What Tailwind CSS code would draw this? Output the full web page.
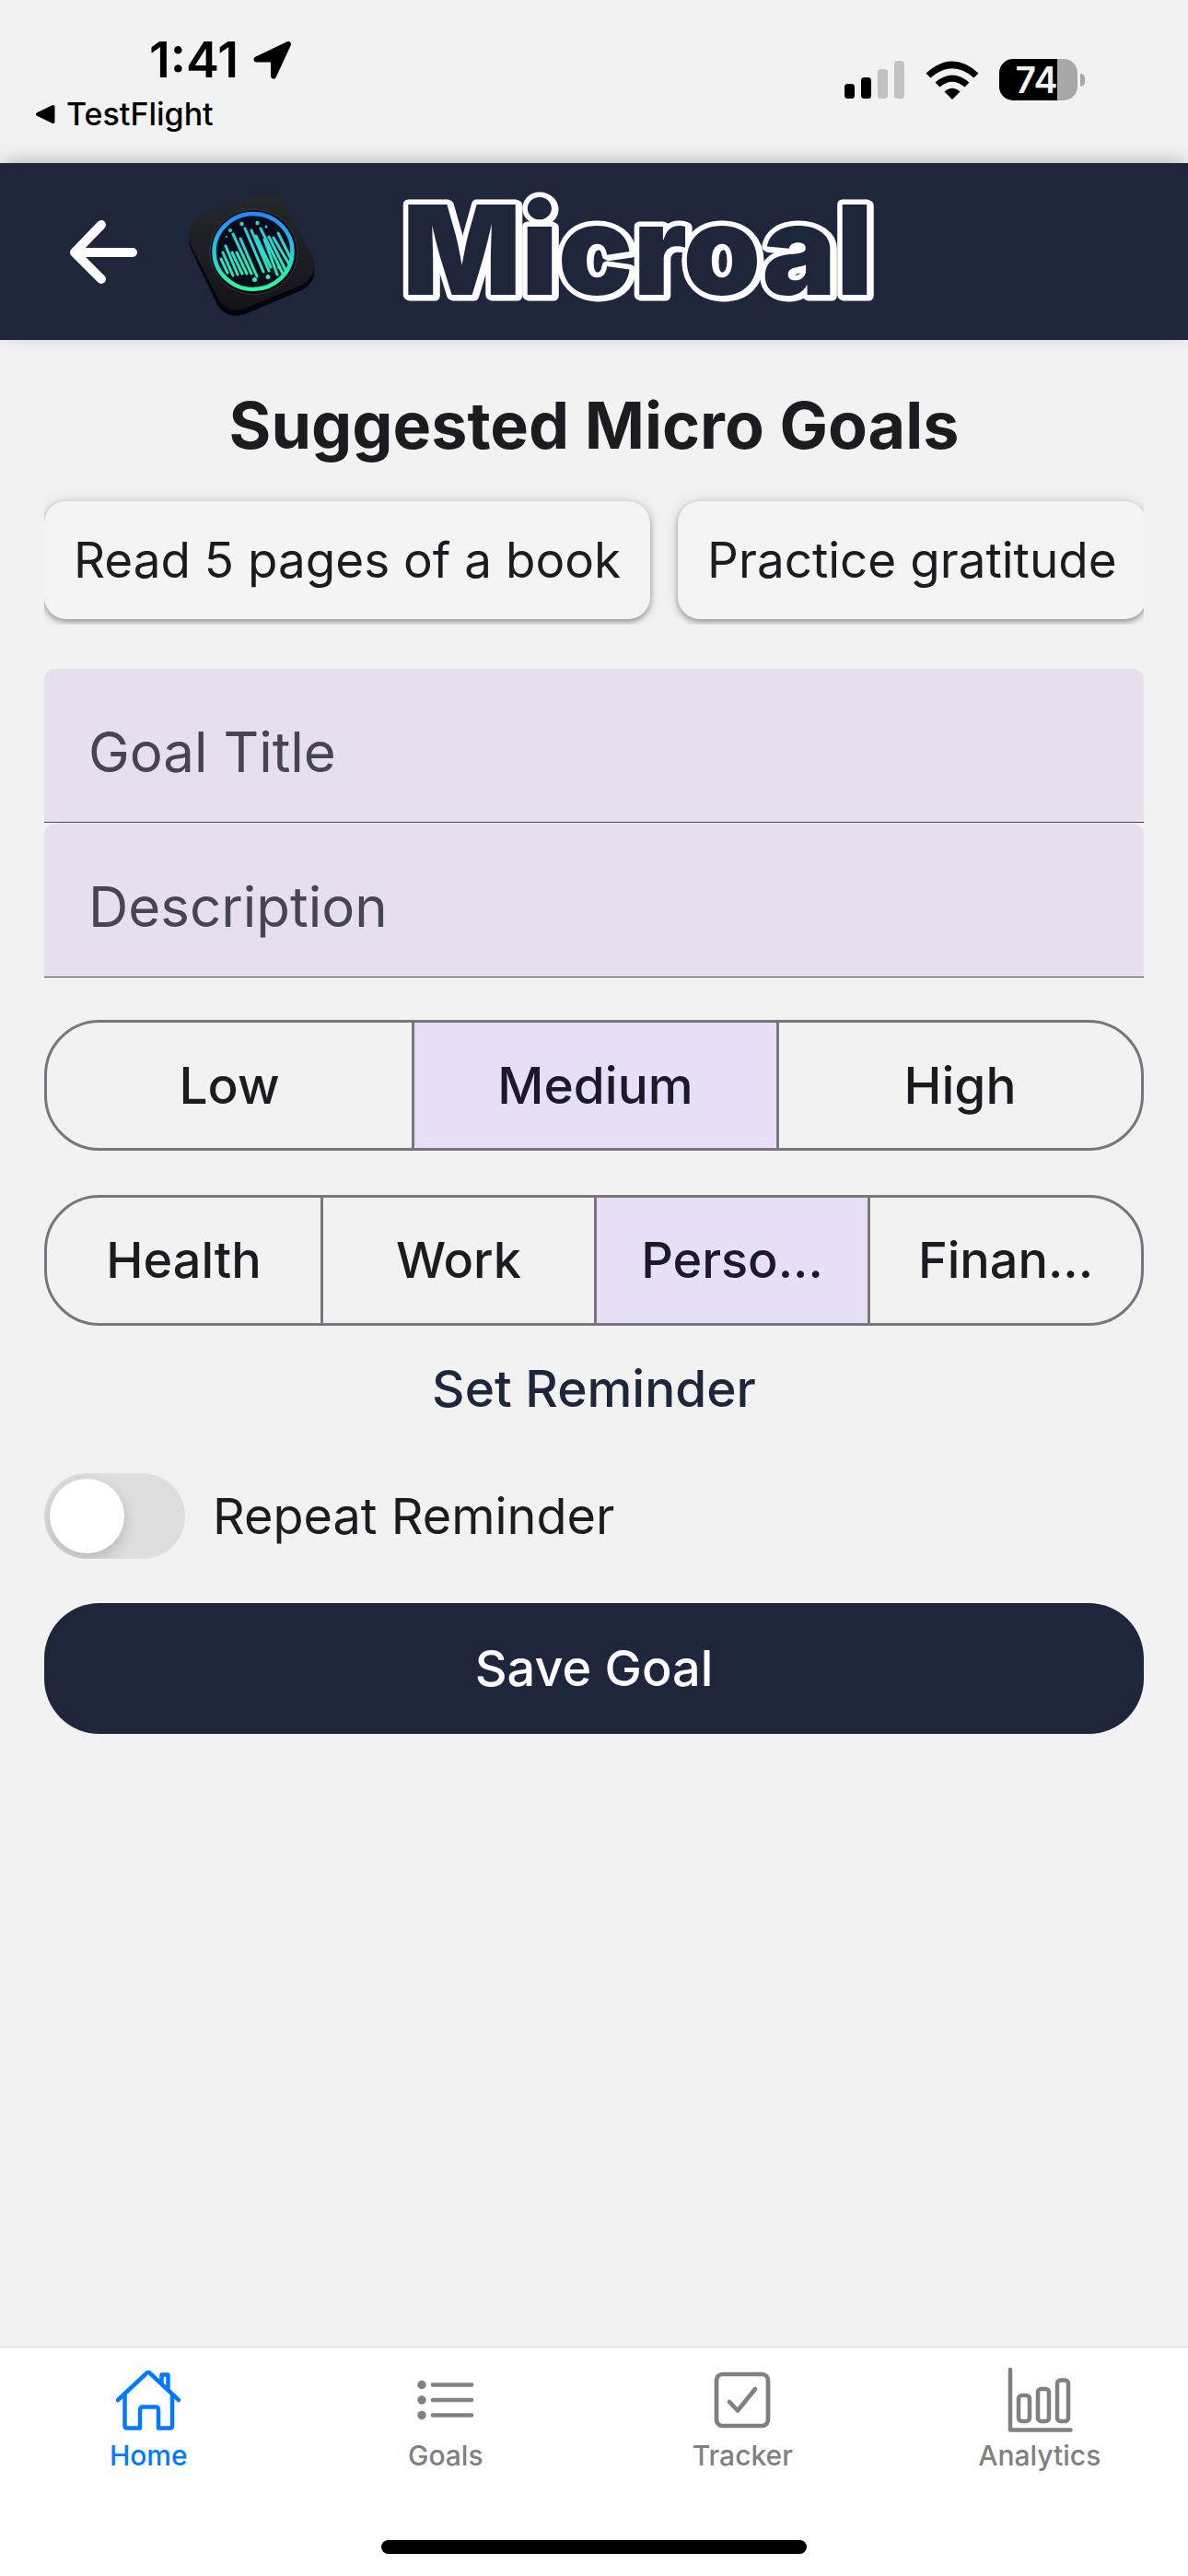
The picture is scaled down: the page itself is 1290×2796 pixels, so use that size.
<!DOCTYPE html>
<html lang="en">
<head>
<meta charset="utf-8">
<meta name="viewport" content="width=device-width, initial-scale=1">
<title>Microal</title>
<script src="https://cdn.jsdelivr.net/npm/@tailwindcss/browser@4"></script>
</head>
<body class="flex min-h-screen flex-col bg-[#f2f2f2] font-['Inter',sans-serif] text-[#1c1b1f]">

<!-- Status bar -->
<div class="flex h-[177px] items-start justify-between pr-[112px] pl-9 text-black">
  <div class="flex flex-col pt-9">
    <div class="flex items-center gap-4 pl-[126px]">
      <span class="text-[54px] leading-[58px] font-semibold">1:41</span>
      <svg class="h-[42px] w-[42px]" viewBox="0 0 42 42" aria-hidden="true"><path d="M3.500 20.500 L38 4 L22 38.500 V20.500 Z" fill="currentColor" stroke="currentColor" stroke-width="6" stroke-linejoin="round"/></svg>
    </div>
    <a href="#" class="flex items-center gap-3">
      <svg class="h-6 w-6" viewBox="0 0 24 24" aria-hidden="true"><path d="M5 12 L21.500 4 V20 Z" fill="currentColor" stroke="currentColor" stroke-width="4" stroke-linejoin="round"/></svg>
      <span class="text-[34px] leading-[60px] font-medium">TestFlight</span>
    </a>
  </div>
  <div class="flex items-center gap-[22px] pt-16">
    <svg class="h-[41px] w-[66px]" viewBox="0 0 66 41" aria-hidden="true">
      <rect x="0" y="25" width="11" height="16" rx="3.500"/><rect x="18" y="18" width="11" height="23" rx="3.500"/>
      <rect x="36" y="9" width="11" height="32" rx="3.500" fill="#c2c2c2"/><rect x="54" y="0" width="11" height="41" rx="3.500" fill="#c2c2c2"/>
    </svg>
    <svg class="h-[42px] w-[58px]" viewBox="0 0 58 42" aria-hidden="true">
      <path d="M29 42 L20.500 33.500 Q29 26 37.500 33.500 Z"/>
      <path d="M10.500 23.500 Q29 7.500 47.500 23.500 L42.500 28.500 Q29 17 15.500 28.500 Z"/>
      <path d="M0.500 13.500 Q29 -12.500 57.500 13.500 L52.500 18.500 Q29 -2 5.500 18.500 Z"/>
    </svg>
    <div class="flex items-center gap-[3px]">
      <div class="flex h-[45px] w-[85px] items-center justify-center rounded-[15px] bg-linear-to-r from-black from-74% to-[#a8a8a8] to-74% pr-1 text-[39px] leading-[45px] font-semibold text-[#f2f2f2]">74</div>
      <div class="h-[14px] w-[5px] rounded-r-full bg-[#a8a8a8]"></div>
    </div>
  </div>
</div>

<!-- App header -->
<header class="flex h-48 items-center bg-[#1e263b] pl-[72px] shadow-[0_-4px_20px_-4px_rgba(0,0,0,0.3)]">
  <button type="button" aria-label="Back">
    <svg class="h-[74px] w-20" viewBox="0 0 80 74" fill="none" stroke="#fff" stroke-width="10" stroke-linecap="round" stroke-linejoin="round" aria-hidden="true"><path d="M10 38 H72 M38 8 L9 38 L38 67"/></svg>
  </button>
  <svg class="ml-[52px] h-[140px] w-[142px]" viewBox="0 -5 142 140" aria-hidden="true">
    <defs>
      <linearGradient id="ring" x1="0" y1="0" x2="0" y2="1"><stop offset="0" stop-color="#1f8bff"/><stop offset=".5" stop-color="#22c8e0"/><stop offset="1" stop-color="#2dfb9c"/></linearGradient>
      <linearGradient id="wave" gradientUnits="userSpaceOnUse" x1="0" y1="32" x2="0" y2="100"><stop offset="0" stop-color="#2cc4f0"/><stop offset="1" stop-color="#2df0a0"/></linearGradient>
      <linearGradient id="tile" x1="0" y1="0" x2="0" y2="1"><stop offset="0" stop-color="#27282c"/><stop offset="1" stop-color="#131419"/></linearGradient>
    </defs>
    <path d="M1 50 Q1 36 14 28 L80 4 Q98 0 107 16 L136 77 Q141 96 126 106 L62 133 Q42 139 32 123 L4 64 Q1 57 1 50 Z" fill="#04050c"/>
    <path d="M1 48 Q1 34 16 26 L80 3 Q98 -1 107 15 L136 73 Q141 91 125 101 L61 127 Q42 133 33 116 L4 60 Q1 54 1 48 Z" fill="url(#tile)"/>
    <ellipse cx="71.500" cy="65.500" rx="47.500" ry="46" fill="#06070f" stroke="#3a3b40" stroke-width="1"/>
    <ellipse cx="71" cy="65" rx="42.500" ry="41" fill="#060b19" stroke="url(#ring)" stroke-width="4.500"/>
    <g stroke="url(#wave)" stroke-width="3" stroke-linecap="round" fill="none">
      <path d="M36 73 L43 88 M38 66 L49 91 M41 59 L54 90 M48 66 L59 89 M53 66 L64 89 M49 46 L69 89 M57 51 L75 92 M62 40 L82 87 M69 42 L88 86 M74 48 L90 82 M79 40 L103 89 M83 52 L97 90 M88 49 L107 87 M93 50 L110 79 M98 45 L112 73"/>
    </g>
    <g fill="#2cd0dc"><circle cx="46" cy="42" r="2"/><circle cx="58.500" cy="35" r="2.200"/><circle cx="75.500" cy="34" r="2.200"/><circle cx="85" cy="38" r="1.500"/><circle cx="42" cy="49" r="1"/></g>
    <g fill="#2df0b0"><circle cx="72.500" cy="95.500" r="2.500"/><circle cx="87" cy="92.500" r="2.500"/><circle cx="99" cy="82" r="2"/></g>
  </svg>
  <svg class="ml-[88px] h-[184px] w-[540px] overflow-visible drop-shadow-[2px_1px_0_white]" viewBox="0 0 540 184" role="img" aria-label="Microal">
    <text x="3" y="139" class="text-[135px] font-black" fill="#1e263b" stroke="#fff" stroke-width="11" stroke-linejoin="round" paint-order="stroke">Microal</text>
  </svg>
</header>

<main class="flex flex-col px-12 pt-12">
  <h1 class="text-center text-[70px] leading-[90px] font-bold">Suggested Micro Goals</h1>

  <div class="mt-[18px] flex gap-[30px] overflow-x-auto pt-[19px] pb-[6px] [scrollbar-width:none]">
    <button type="button" class="h-32 shrink-0 rounded-3xl bg-[#f4f4f4] px-8 text-[53px] leading-none whitespace-nowrap shadow-[0_3px_6px_rgba(0,0,0,0.35),0_0_16px_rgba(0,0,0,0.12)]">Read 5 pages of a book</button>
    <button type="button" class="h-32 shrink-0 rounded-3xl bg-[#f4f4f4] px-8 text-[53px] leading-none whitespace-nowrap shadow-[0_3px_6px_rgba(0,0,0,0.35),0_0_16px_rgba(0,0,0,0.12)]">Practice gratitude</button>
  </div>

  <form class="mt-12 flex flex-col">
    <input type="text" aria-label="Goal Title" placeholder="Goal Title" class="mb-px h-[167px] w-full rounded-t-xl border-b border-[#49454f] bg-[#e7e0ec] px-12 pt-[14px] text-[60px] outline-none placeholder:text-[#49454f]">
    <input type="text" aria-label="Description" placeholder="Description" class="h-[167px] w-full rounded-t-xl border-b border-[#49454f] bg-[#e7e0ec] px-12 pt-[14px] text-[60px] outline-none placeholder:text-[#49454f]">

    <fieldset aria-label="Priority" class="mt-[46px] grid h-[142px] grid-cols-3 overflow-hidden rounded-[60px] border-3 border-[#79747e] text-[55px] leading-none font-medium">
      <label class="relative flex items-center justify-center has-checked:bg-[#e8def8]"><input type="radio" name="priority" class="sr-only">Low</label>
      <label class="relative flex items-center justify-center border-l-3 border-[#79747e] text-[#1d192b] has-checked:bg-[#e8def8]"><input type="radio" name="priority" class="sr-only" checked>Medium</label>
      <label class="relative flex items-center justify-center border-l-3 border-[#79747e] has-checked:bg-[#e8def8]"><input type="radio" name="priority" class="sr-only">High</label>
    </fieldset>

    <fieldset aria-label="Category" class="mt-12 grid h-[142px] grid-cols-4 overflow-hidden rounded-[60px] border-3 border-[#79747e] text-[54px] leading-none font-medium">
      <label class="relative flex items-center justify-center has-checked:bg-[#e8def8]"><input type="radio" name="category" class="sr-only">Health</label>
      <label class="relative flex items-center justify-center border-l-3 border-[#79747e] has-checked:bg-[#e8def8]"><input type="radio" name="category" class="sr-only">Work</label>
      <label class="relative flex items-center justify-center border-l-3 border-[#79747e] text-[#1d192b] has-checked:bg-[#e8def8]"><input type="radio" name="category" class="sr-only" checked>Perso...</label>
      <label class="relative flex items-center justify-center border-l-3 border-[#79747e] has-checked:bg-[#e8def8]"><input type="radio" name="category" class="sr-only">Finan...</label>
    </fieldset>

    <button type="button" class="mt-6 h-[88px] self-center text-[55px] leading-none font-medium text-[#1e263b]">Set Reminder</button>

    <div class="mt-12 flex items-center gap-[30px]">
      <input id="repeat" type="checkbox" role="switch" class="h-[93px] w-[153px] appearance-none overflow-hidden rounded-full bg-[#dedede] p-[6px] before:block before:size-[81px] before:rounded-full before:bg-white before:shadow-[0_6px_16px_rgba(0,0,0,0.18)] checked:bg-[#1e263b] checked:before:ml-auto">
      <label for="repeat" class="text-[54px] leading-none">Repeat Reminder</label>
    </div>

    <button type="submit" class="mt-12 h-[142px] rounded-[60px] bg-[#1e263b] text-[54px] leading-none font-medium text-white">Save Goal</button>
  </form>
</main>

<!-- Tab bar -->
<nav class="mt-auto border-t border-[#d8d8d8] bg-white pb-6 text-[30px] leading-9 font-medium text-[#808080]">
  <div class="grid grid-cols-4">
    <a href="#" aria-current="page" class="flex flex-col items-center gap-[3px] pt-5 text-[#007aff]">
      <svg class="size-[76px]" viewBox="0 0 76 76" fill="none" stroke="currentColor" stroke-width="4.500" stroke-linecap="round" stroke-linejoin="round" aria-hidden="true"><path d="M5 37 L35.500 8.500 Q38 5.500 40.500 8.500 L71 37 M12.500 31 V65 Q12.500 67.500 15 67.500 H29 V48 Q29 44.500 32 44.500 H46 Q49 44.500 49 48 V67.500 H61.500 Q64 67.500 64 65 V31 M52.500 19 V9.500 H59.500 V25"/></svg>
      Home
    </a>
    <a href="#" class="flex flex-col items-center gap-[3px] pt-5">
      <svg class="size-[76px]" viewBox="0 0 76 76" fill="none" stroke="currentColor" stroke-width="4.500" stroke-linecap="round" aria-hidden="true"><path d="M24 20.500 H66 M24 37 H66 M24 53.500 H66"/><g fill="currentColor" stroke="none"><circle cx="12" cy="20.500" r="4.700"/><circle cx="12" cy="37" r="4.700"/><circle cx="12" cy="53.500" r="4.700"/></g></svg>
      Goals
    </a>
    <a href="#" class="flex flex-col items-center gap-[3px] pt-5">
      <svg class="size-[76px]" viewBox="0 0 76 76" fill="none" stroke="currentColor" stroke-width="4.700" stroke-linecap="round" stroke-linejoin="round" aria-hidden="true"><rect x="10" y="9" width="56" height="56" rx="6.500"/><path d="M24 39 L33 48.500 L52 25"/></svg>
      Tracker
    </a>
    <a href="#" class="flex flex-col items-center gap-[3px] pt-5">
      <svg class="size-[76px]" viewBox="0 0 76 76" fill="none" stroke="currentColor" stroke-width="4.500" stroke-linecap="round" stroke-linejoin="round" aria-hidden="true"><path d="M6 4 V69.500 H71.500"/><rect x="15" y="32" width="12" height="28" rx="3.500"/><rect x="36" y="25" width="12" height="35" rx="3.500"/><rect x="57" y="15.500" width="12" height="44.500" rx="3.500"/></svg>
      Analytics
    </a>
  </div>
  <div class="mx-auto mt-[74px] h-[15px] w-[462px] rounded-full bg-black"></div>
</nav>
</body>
</html>
